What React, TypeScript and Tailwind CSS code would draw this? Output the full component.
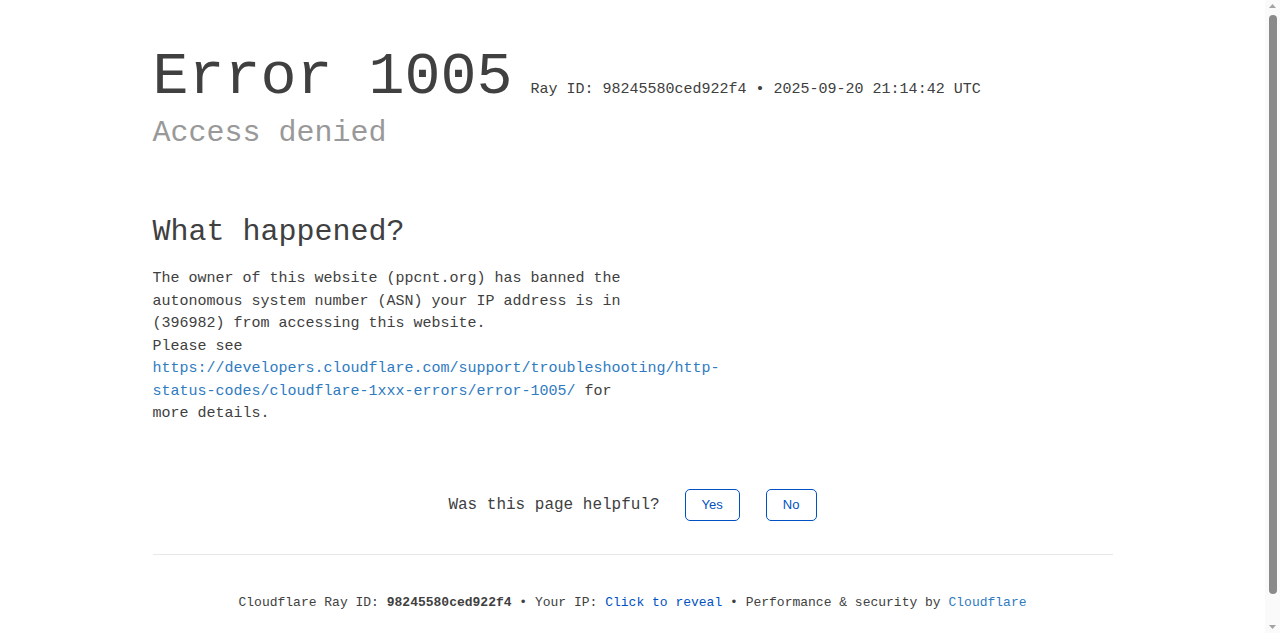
const mono = 'font-["Liberation_Mono",Cousine,"DejaVu_Sans_Mono",monospace]';

function Feedback() {
  return (
    <div className="flex items-center justify-center">
      <span className="text-[16px] leading-[24px] text-[#404040]">Was this page helpful?</span>
      <button className='ml-[25px] h-[32px] w-[55px] rounded-[5px] border border-[#0051c3] bg-white text-[13px] text-[#0051c3] font-["Liberation_Sans",Arial,sans-serif]'>
        Yes
      </button>
      <button className='ml-[26px] h-[32px] w-[51px] rounded-[5px] border border-[#0051c3] bg-white text-[13px] text-[#0051c3] font-["Liberation_Sans",Arial,sans-serif]'>
        No
      </button>
    </div>
  );
}

// browser scrollbar, drawn over the right edge
function Scrollbar() {
  return (
    <div className="fixed right-0 top-0 flex h-screen w-[15px] flex-col items-center bg-[#fafafa]">
      <svg width="9" height="12" viewBox="0 0 9 12" className="mt-[1px]">
        <path d="M4.5 3 L8 7 L1 7 Z" fill="#a3a3a3" />
      </svg>
      <div className="mt-[2px] w-[8px] flex-1 rounded-full bg-[#8a8a8a]" />
      <div className="h-[26px]" />
      <svg width="9" height="12" viewBox="0 0 9 12" className="mb-[1px]">
        <path d="M1 5 L8 5 L4.5 9 Z" fill="#a3a3a3" />
      </svg>
    </div>
  );
}

export default function App() {
  return (
    <div className={`${mono} min-h-[666px] bg-white pr-[15px] text-[#404040]`}>
      <Scrollbar />
      <div className="mx-auto max-w-[960px] pt-[41px] pb-[50px]">
        <div className="flex items-baseline">
          <h1 className="text-[60px] leading-[72px] text-[#404040]">Error 1005</h1>
          <span className="ml-[18px] text-[15px] text-[#404040]">
            Ray ID: 98245580ced922f4 • 2025-09-20 21:14:42 UTC
          </span>
        </div>
        <h2 className="mt-[2px] text-[30px] leading-[36px] text-[#999999]">Access denied</h2>

        <section className="mt-[63px]">
          <h2 className="text-[30px] leading-[36px] text-[#404040]">What happened?</h2>
          <div className="mt-[18px] w-[480px] text-[15px] leading-[22.5px] text-[#404040]">
            <p>
              The owner of this website (ppcnt.org) has banned the autonomous system number (ASN) your IP address is
              in (396982) from accessing this website.
            </p>
            <p>
              Please see{' '}
              <a href="#" className="text-[#2f7bbf] no-underline">
                https://developers.cloudflare.com/support/troubleshooting/http-status-codes/cloudflare-1xxx-errors/error-1005/
              </a>{' '}
              for more details.
            </p>
          </div>
        </section>

        <div className="mt-[63px]">
          <Feedback />
        </div>

        <div className="mt-[33px] border-t border-[#e8e8e8] pt-[38px] text-center text-[13px] leading-[19.5px] text-[#404040]">
          Cloudflare Ray ID: <strong className="font-bold">98245580ced922f4</strong> • Your IP:{' '}
          <button className="text-[#0051c3]">Click to reveal</button> • Performance &amp; security by{' '}
          <a href="#" className="text-[#2f7bbf]">
            Cloudflare
          </a>
        </div>
      </div>
    </div>
  );
}
